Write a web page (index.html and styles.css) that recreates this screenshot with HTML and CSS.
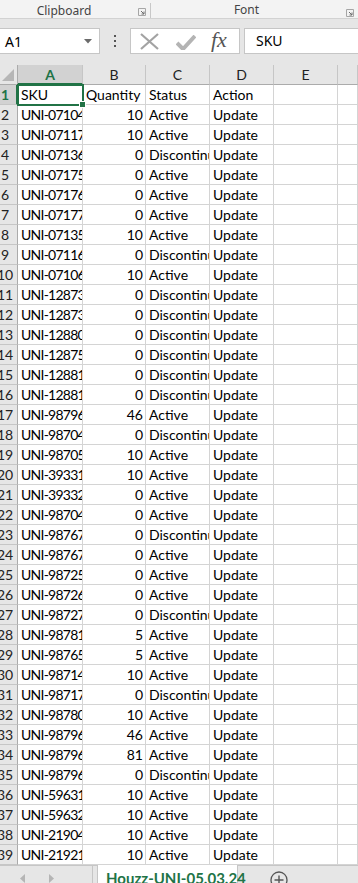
FILE: index.html
```html
<!DOCTYPE html>
<html lang="en">
<head>
    <meta charset="UTF-8">
    <meta name="viewport" content="width=device-width, initial-scale=1.0">
    <title>Houzz-UNI-05.03.24</title>
    <link rel="stylesheet" href="styles.css">
</head>
<body>
    <div class="ribbon-groups">
        <div class="group group-clipboard">
            <span class="group-label">Clipboard</span>
            <svg class="launcher" width="8" height="8" viewBox="0 0 8 8"><path d="M0.5 0.5h7v7h-7z" fill="none" stroke="#a6a6a6"/><path d="M3 3l3 3M6 3.5v2.5h-2.5" fill="none" stroke="#6d6d6d"/></svg>
        </div>
        <div class="group group-font">
            <span class="group-label">Font</span>
            <svg class="launcher" width="8" height="8" viewBox="0 0 8 8"><path d="M0.5 0.5h7v7h-7z" fill="none" stroke="#a6a6a6"/><path d="M3 3l3 3M6 3.5v2.5h-2.5" fill="none" stroke="#6d6d6d"/></svg>
        </div>
    </div>

    <div class="formula-area">
        <div class="name-box">
            <span>A1</span>
            <svg width="8" height="5" viewBox="0 0 8 5"><path d="M0 0h8l-4 4.5z" fill="#6b6b6b"/></svg>
        </div>
        <div class="grip">
            <i></i><i></i><i></i>
        </div>
        <div class="fx-buttons">
            <svg class="btn-cancel" width="19" height="17" viewBox="0 0 19 17"><path d="M1 1l17 15M18 1L1 16" stroke="#a3a3a3" stroke-width="2.2" fill="none"/></svg>
            <svg class="btn-enter" width="20" height="15" viewBox="0 0 20 15"><path d="M1 8l6 6L19 1" stroke="#b4b4b4" stroke-width="4" fill="none"/></svg>
            <span class="fx">fx</span>
        </div>
        <div class="formula-input">SKU</div>
    </div>

    <div class="sheet" id="sheet">
        <div class="selection"><span class="handle"></span></div>
    </div>

    <div class="tabs">
        <div class="tab-nav">
            <svg width="6" height="9" viewBox="0 0 6 9"><path d="M5 0v9L0 4.5z" fill="#b5b5b5"/></svg>
            <svg width="6" height="9" viewBox="0 0 6 9"><path d="M1 0v9l5-4.5z" fill="#b5b5b5"/></svg>
        </div>
        <div class="tab-sep"></div>
        <div class="tab active">Houzz-UNI-05.03.24</div>
        <div class="tab-add">
            <svg width="18" height="18" viewBox="0 0 18 18"><circle cx="9" cy="9" r="8" fill="none" stroke="#555" stroke-width="1.3"/><path d="M9 4.5v9M4.5 9h9" stroke="#555" stroke-width="1.4"/></svg>
        </div>
    </div>

    <script>
        // sheet data: sku, quantity, status, action
        const rows = [
            ['SKU', 'Quantity', 'Status', 'Action'],
            ['UNI-07104', 10, 'Active', 'Update'],
            ['UNI-07117', 10, 'Active', 'Update'],
            ['UNI-07136', 0, 'Discontinued', 'Update'],
            ['UNI-07175', 0, 'Active', 'Update'],
            ['UNI-07176', 0, 'Active', 'Update'],
            ['UNI-07177', 0, 'Active', 'Update'],
            ['UNI-07135', 10, 'Active', 'Update'],
            ['UNI-07116', 0, 'Discontinued', 'Update'],
            ['UNI-07106', 10, 'Active', 'Update'],
            ['UNI-12873', 0, 'Discontinued', 'Update'],
            ['UNI-12873', 0, 'Discontinued', 'Update'],
            ['UNI-12880', 0, 'Discontinued', 'Update'],
            ['UNI-12875', 0, 'Discontinued', 'Update'],
            ['UNI-12881', 0, 'Discontinued', 'Update'],
            ['UNI-12881', 0, 'Discontinued', 'Update'],
            ['UNI-98796', 46, 'Active', 'Update'],
            ['UNI-98704', 0, 'Discontinued', 'Update'],
            ['UNI-98705', 10, 'Active', 'Update'],
            ['UNI-39331', 10, 'Active', 'Update'],
            ['UNI-39332', 0, 'Active', 'Update'],
            ['UNI-98704', 0, 'Active', 'Update'],
            ['UNI-98767', 0, 'Discontinued', 'Update'],
            ['UNI-98767', 0, 'Active', 'Update'],
            ['UNI-98725', 0, 'Active', 'Update'],
            ['UNI-98726', 0, 'Active', 'Update'],
            ['UNI-98727', 0, 'Discontinued', 'Update'],
            ['UNI-98781', 5, 'Active', 'Update'],
            ['UNI-98765', 5, 'Active', 'Update'],
            ['UNI-98714', 10, 'Active', 'Update'],
            ['UNI-98717', 0, 'Discontinued', 'Update'],
            ['UNI-98780', 10, 'Active', 'Update'],
            ['UNI-98796', 46, 'Active', 'Update'],
            ['UNI-98796', 81, 'Active', 'Update'],
            ['UNI-98796', 0, 'Discontinued', 'Update'],
            ['UNI-59631', 10, 'Active', 'Update'],
            ['UNI-59632', 10, 'Active', 'Update'],
            ['UNI-21904', 10, 'Active', 'Update'],
            ['UNI-21921', 10, 'Active', 'Update']
        ];

        const sheet = document.getElementById('sheet');
        let html = '<div class="corner"><svg width="12" height="12" viewBox="0 0 12 12"><path d="M12 0v12H0z" fill="#b6b6b6"/></svg></div>';
        // column F only peeks in at the right edge, its letter is off screen
        ['A', 'B', 'C', 'D', 'E', ''].forEach((col, i) => {
            html += `<div class="col-head${i === 0 ? ' current' : ''}">${col}</div>`;
        });

        rows.forEach((row, r) => {
            html += `<div class="row-head${r === 0 ? ' current' : ''}"><span>${r + 1}</span></div>`;
            row.forEach((value, c) => {
                let cls = 'cell';
                if (typeof value === 'number') cls += ' num';
                if (c === 0 && r > 0) cls += ' sku';
                html += `<div class="${cls}">${value}</div>`;
            });
            html += '<div class="cell"></div><div class="cell"></div>';
        });

        sheet.insertAdjacentHTML('beforeend', html);
    </script>
</body>
</html>
```

FILE: styles.css
```css
body {
    margin: 0;
    width: 358px;
    height: 883px;
    overflow: hidden;
    background: #e6e6e6;
    font-family: Lato, "Liberation Sans", sans-serif;
    color: #000;
}

/* ribbon group names */
.ribbon-groups {
    display: flex;
    height: 18px;
    background: #f3f3f3;
    border-bottom: 1px solid #d2d2d2;
    font-family: "Noto Sans", sans-serif;
    font-size: 12px;
    color: #444;
}

.group {
    position: relative;
    display: flex;
    justify-content: center;
    align-items: center;
}

.group-clipboard {
    width: 150px;
    border-right: 1px solid #c8c8c8;
    height: 15px;
    margin-top: 3px;
    align-items: flex-end;
}

.group-clipboard .group-label {
    margin-right: 22px;
    line-height: 14px;
}

.group-font {
    flex: 1;
    align-items: flex-end;
}

.group-font .group-label {
    margin-right: 16px;
    line-height: 16px;
}

.launcher {
    position: absolute;
    right: 4px;
    bottom: 2px;
}

.group-font .launcher {
    right: 4px;
    bottom: 1px;
}

/* name box + formula bar */
.formula-area {
    display: flex;
    align-items: center;
    height: 46px;
    font-family: "Noto Sans", sans-serif;
}

.name-box {
    display: flex;
    justify-content: space-between;
    align-items: center;
    box-sizing: border-box;
    width: 100px;
    height: 26px;
    margin-top: -2px;
    padding: 0 7px 0 5px;
    background: #fff;
    border: 1px solid #c6c6c6;
    border-left: none;
    font-size: 14px;
}

.grip {
    display: flex;
    flex-direction: column;
    gap: 3px;
    width: 30px;
    align-items: center;
    margin-top: -2px;
}

.grip i {
    display: block;
    width: 2px;
    height: 2px;
    background: #555;
}

.fx-buttons {
    display: flex;
    align-items: center;
    box-sizing: border-box;
    width: 110px;
    height: 26px;
    margin-top: -2px;
    background: #fff;
    border: 1px solid #c6c6c6;
    padding-left: 9px;
}

.btn-enter {
    margin-left: 17px;
    margin-top: 3px;
}

.fx {
    margin-left: 15px;
    font-family: "Liberation Serif", serif;
    font-style: italic;
    font-size: 22px;
    line-height: 22px;
    color: #555;
    margin-top: -2px;
}

.formula-input {
    flex: 1;
    box-sizing: border-box;
    height: 26px;
    margin-left: 4px;
    margin-top: -2px;
    padding-left: 11px;
    background: #fff;
    border: 1px solid #c6c6c6;
    border-right: none;
    font-size: 14px;
    line-height: 24px;
}

/* worksheet grid */
.sheet {
    position: relative;
    display: grid;
    grid-template-columns: 18px 65px 63px 64px 64px 64px 1fr;
    grid-auto-rows: 20px;
    height: 800px;
    background: #fff;
    font-size: 14px;
}

.corner,
.col-head,
.row-head {
    background: #e6e6e6;
    box-sizing: border-box;
    border-right: 1px solid #c6c6c6;
    border-bottom: 1px solid #c6c6c6;
}

.corner {
    display: flex;
    align-items: flex-end;
    justify-content: flex-end;
    padding: 0 3px 3px 0;
    border-right-color: #ababab;
    border-bottom-color: #ababab;
}

.col-head {
    text-align: center;
    line-height: 20px;
    color: #222;
    border-bottom-color: #ababab;
}

.col-head.current {
    background: #d2d2d2;
    color: #217346;
    font-weight: bold;
    border-bottom: 2px solid #217346;
}

.row-head {
    overflow: hidden;
    border-right-color: #ababab;
    line-height: 20px;
    color: #222;
}

.row-head span {
    display: block;
    width: 26px;
    margin-left: -8px;
    text-align: center;
}

.row-head.current {
    background: #d2d2d2;
    color: #217346;
    font-weight: bold;
    border-right: 2px solid #217346;
}

.cell {
    box-sizing: border-box;
    overflow: hidden;
    white-space: nowrap;
    padding: 0 2px 0 3px;
    line-height: 19px;
    border-right: 1px solid #d4d4d4;
    border-bottom: 1px solid #d4d4d4;
}

.cell.num {
    text-align: right;
}

.cell.sku {
    padding-left: 3px;
    padding-right: 0;
    letter-spacing: -0.75px;
}

.selection {
    position: absolute;
    left: 17px;
    top: 19px;
    width: 67px;
    height: 22px;
    box-sizing: border-box;
    border: 2px solid #217346;
}

.handle {
    position: absolute;
    right: -4px;
    bottom: -4px;
    width: 5px;
    height: 5px;
    background: #217346;
    border: 1px solid #fff;
}

/* sheet tabs */
.tabs {
    display: flex;
    height: 18px;
    background: #e6e6e6;
    border-top: 1px solid #c6c6c6;
    box-sizing: border-box;
}

.tab-nav {
    display: flex;
    align-items: center;
    gap: 22px;
    width: 92px;
    padding: 8px 0 0 20px;
    box-sizing: border-box;
}

.tab-sep {
    width: 1px;
    background: #c6c6c6;
}

.tab {
    margin-left: 4px;
    margin-top: -1px;
    width: 141px;
    box-sizing: border-box;
    padding: 4px 0 0 8px;
    background: #fff;
    border-left: 1px solid #c6c6c6;
    border-right: 1px solid #c6c6c6;
    font-size: 15px;
    font-weight: bold;
    color: #217346;
    white-space: nowrap;
}

.tab-add {
    margin-left: 32px;
    padding-top: 5px;
}
```
